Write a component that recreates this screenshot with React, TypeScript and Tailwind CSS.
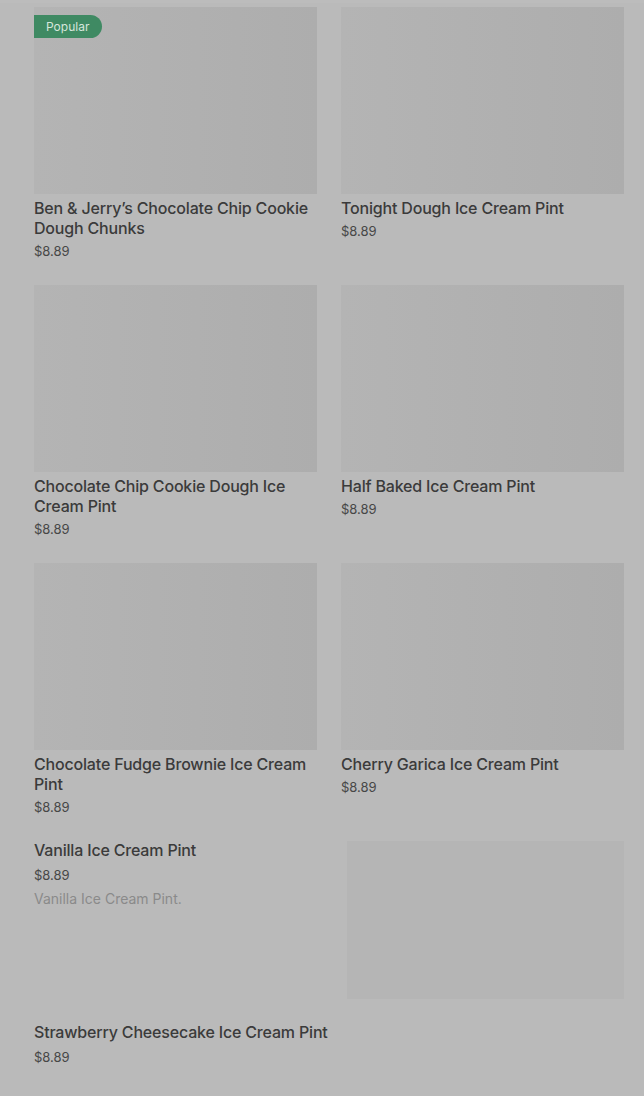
import React from "react";

const font = { fontFamily: "Inter, 'Noto Sans', 'Liberation Sans', sans-serif" };

type Item = { title: string; price: string; popular?: boolean };

const grid: Item[] = [
  { title: "Ben & Jerry’s Chocolate Chip Cookie Dough Chunks", price: "$8.89", popular: true },
  { title: "Tonight Dough Ice Cream Pint", price: "$8.89" },
  { title: "Chocolate Chip Cookie Dough Ice Cream Pint", price: "$8.89" },
  { title: "Half Baked Ice Cream Pint", price: "$8.89" },
  { title: "Chocolate Fudge Brownie Ice Cream Pint", price: "$8.89" },
  { title: "Cherry Garica Ice Cream Pint", price: "$8.89" },
];

function Card({ item }: { item: Item }) {
  return (
    <div className="flex flex-col">
      <div className="relative h-[187px] w-full bg-gradient-to-r from-[#b4b4b4] to-[#adadad]">
        {item.popular && (
          <span className="absolute left-0 top-[8px] flex h-[23px] items-center rounded-r-full bg-[#3f8a63] pl-[12px] pr-[13px] text-[12px] text-[#d6e6dc]">
            Popular
          </span>
        )}
      </div>
      <div className="mt-[4px] text-[16px] font-medium leading-[20px] tracking-[-0.18px] text-[#3b3b3b]">
        {item.title}
      </div>
      <div className="mt-[3px] text-[13px] leading-[20px] text-[#474747]">{item.price}</div>
    </div>
  );
}

export default function App() {
  return (
    <div className="min-h-[1096px] w-[644px] bg-[#bababa]" style={font}>
      <div className="h-[7px] w-full border-t-[3px] border-[#bcbcbc]" />
      <div className="pl-[34px] pr-[20px]">
        <div className="grid grid-cols-2 gap-x-[24px] gap-y-[24px]">
          {grid.map((it, i) => (
            <Card key={i} item={it} />
          ))}
        </div>
        <div className="mt-[23px] flex">
          <div className="flex-1">
            <div className="text-[16px] font-medium leading-[20px] tracking-[-0.18px] text-[#3b3b3b]">Vanilla Ice Cream Pint</div>
            <div className="mt-[5px] text-[13px] leading-[20px] text-[#474747]">$8.89</div>
            <div className="mt-[4px] text-[14px] leading-[20px] text-[#8a8a8a]">Vanilla Ice Cream Pint.</div>
          </div>
          <div className="mt-[1px] h-[158px] w-[277px] bg-[#b5b5b5]" />
        </div>
        <div className="mt-[23px]">
          <div className="text-[16px] font-medium leading-[20px] tracking-[-0.18px] text-[#3b3b3b]">Strawberry Cheesecake Ice Cream Pint</div>
          <div className="mt-[5px] text-[13px] leading-[20px] text-[#474747]">$8.89</div>
        </div>
      </div>
    </div>
  );
}
